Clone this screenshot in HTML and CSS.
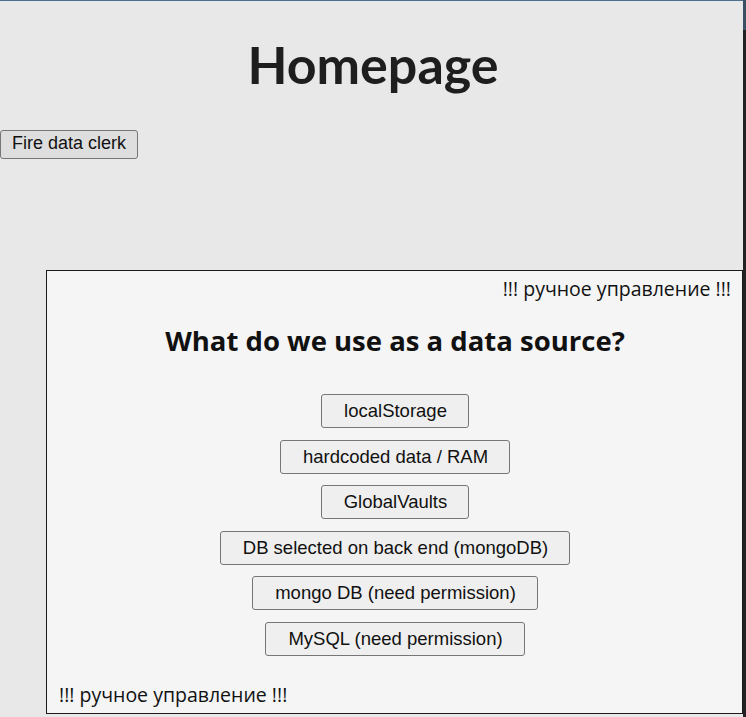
FILE: index.html
```html
<!DOCTYPE html>
<html lang="en">
<head>
<meta charset="utf-8">
<title>Homepage</title>
<link rel="stylesheet" href="styles.css">
</head>
<body>
<div class="page">
  <h1 class="title">Homepage</h1>
  <button class="btn btn-fire">Fire data clerk</button>
</div>
<div class="panel">
  <div class="note note-top">!!! ручное управление !!!</div>
  <h2 class="question">What do we use as a data source?</h2>
  <div class="options">
    <button class="btn btn-opt">localStorage</button>
    <button class="btn btn-opt">hardcoded data / RAM</button>
    <button class="btn btn-opt">GlobalVaults</button>
    <button class="btn btn-opt">DB selected on back end (mongoDB)</button>
    <button class="btn btn-opt">mongo DB (need permission)</button>
    <button class="btn btn-opt">MySQL (need permission)</button>
  </div>
  <div class="note note-bottom">!!! ручное управление !!!</div>
</div>
<div class="edge"><div class="edge-top"></div></div>
</body>
</html>
```
FILE: styles.css
```css
html, body {
  margin: 0;
  padding: 0;
  height: 100%;
}
body {
  background: #e8e8e8;
  border-top: 1px solid #4b6f8e;
  box-sizing: border-box;
  font-family: "Liberation Sans", Arial, sans-serif;
  color: #1e1e1e;
  overflow: hidden;
}
.page {
  display: flex;
  flex-direction: column;
  align-items: flex-start;
}
.title {
  align-self: stretch;
  text-align: center;
  font-family: Lato, "Open Sans", sans-serif;
  font-weight: 700;
  font-size: 52px;
  line-height: 60px;
  margin: 33px 0 36px 0;
  color: #1e1e1e;
}
.btn {
  font-family: "Liberation Sans", Arial, sans-serif;
  font-size: 18px;
  line-height: 21px;
  color: #111;
  background: #efefef;
  border: 1px solid #767676;
  border-radius: 3px;
  cursor: pointer;
}
.btn-fire {
  background: #dedede;
  padding: 2px 11px 4px 11px;
}
.panel {
  position: fixed;
  left: 46px;
  top: 270px;
  width: 697px;
  height: 444px;
  box-sizing: border-box;
  border: 1px solid #1a1a1a;
  background: #f5f5f5;
  display: flex;
  flex-direction: column;
  padding: 6px 11px 6px 12px;
}
.note {
  font-family: "Open Sans", "DejaVu Sans", sans-serif;
  font-size: 19.5px;
  line-height: 24px;
  color: #111;
}
.note-top {
  text-align: right;
}
.note-bottom {
  margin-top: auto;
}
.question {
  text-align: center;
  font-family: "Open Sans", "DejaVu Sans", sans-serif;
  font-weight: 700;
  font-size: 27.5px;
  line-height: 34px;
  margin: 23px 0 36px 0;
  color: #111;
}
.options {
  display: flex;
  flex-direction: column;
  align-items: center;
  gap: 11.5px;
}
.btn-opt {
  font-size: 18.5px;
  padding: 5px 21px 6px 22px;
}
.edge {
  position: fixed;
  top: 0;
  right: 0;
  width: 3px;
  height: 100%;
  background: #222222;
}
.edge-top {
  height: 30px;
  background: #3c5064;
}
```
